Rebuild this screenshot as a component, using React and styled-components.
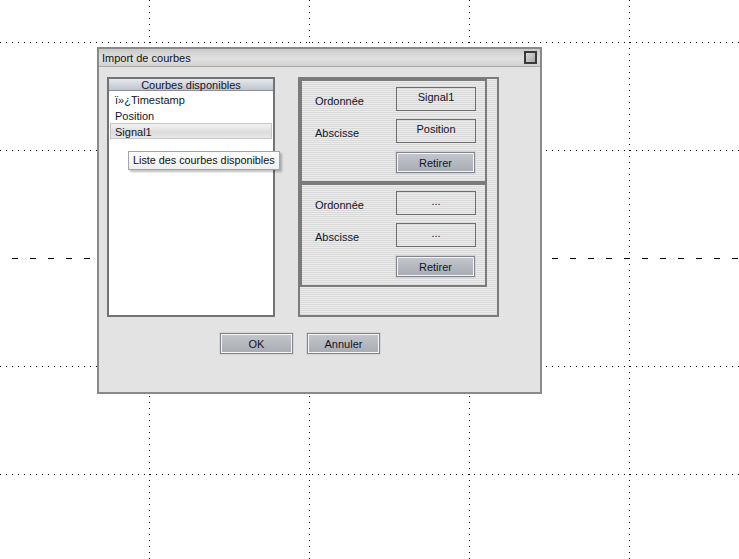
import React from 'react'
import styled, { createGlobalStyle } from 'styled-components'

const GlobalStyle = createGlobalStyle`
  html, body {
    margin: 0;
    padding: 0;
    background: #ffffff;
  }
  * {
    box-sizing: border-box;
  }
`

const Desktop = styled.div`
  position: relative;
  width: 739px;
  height: 559px;
  overflow: hidden;
  background: #ffffff;
  font-family: 'Liberation Sans', Arial, sans-serif;
  font-size: 11px;
  color: #141428;
`

const GridSvg = styled.svg`
  position: absolute;
  left: 0;
  top: 0;
`

const Dialog = styled.div`
  position: absolute;
  left: 97px;
  top: 47px;
  width: 445px;
  height: 347px;
  border: 2px solid #8a8a8a;
  background: #e3e3e3;
  display: flex;
  flex-direction: column;
`

const TitleBar = styled.div`
  height: 18px;
  display: flex;
  align-items: center;
  justify-content: space-between;
  padding: 0 3px 0 3px;
  background: linear-gradient(#cacaca, #e0e0e0 55%, #d2d2d2);
  border-bottom: 1px solid #a9a9a9;
`

const Title = styled.span`
  font-size: 11px;
  color: #111;
`

const CloseBox = styled.div`
  width: 13px;
  height: 13px;
  border: 2px solid #3a3a3a;
  background: linear-gradient(135deg, #d8d8d8, #a9a9a9);
`

const Content = styled.div`
  display: flex;
  gap: 23px;
  padding: 10px 0 0 8px;
`

const ListBox = styled.div`
  position: relative;
  width: 168px;
  height: 240px;
  border: 2px solid #6f7478;
  background: #ffffff;
  display: flex;
  flex-direction: column;
`

const ListHeader = styled.div`
  height: 12px;
  line-height: 12px;
  text-align: center;
  background: linear-gradient(#e6e9ee, #bfc4cb);
  border-bottom: 1px solid #8c9096;
  color: #141428;
`

const ListItems = styled.div`
  padding-top: 0;
  display: flex;
  flex-direction: column;
`

const ListItem = styled.div`
  height: 16px;
  line-height: 16px;
  padding-left: 4px;
  margin: 0 1px;
  border: 1px solid ${({ $selected }) => ($selected ? '#c6c6c6' : 'transparent')};
  background: ${({ $selected }) =>
    $selected ? 'linear-gradient(#f2f2f2, #dcdcdc 60%, #e8e8e8)' : 'transparent'};
`

const Tooltip = styled.div`
  position: absolute;
  left: 19px;
  top: 72px;
  height: 19px;
  padding: 0 4px;
  line-height: 17px;
  font-size: 10.8px;
  white-space: nowrap;
  border: 1px solid #a5a5a5;
  background: linear-gradient(#ffffff, #eeeeee);
  box-shadow: 2px 2px 2px rgba(0, 0, 0, 0.25);
  color: #111;
`

const SlotsPanel = styled.div`
  width: 201px;
  height: 240px;
  border: 2px solid #7b7b7b;
  background: repeating-linear-gradient(#ececec 0 1px, #d9d9d9 1px 2px);
  display: flex;
  flex-direction: column;
`

const SlotGroup = styled.div`
  width: 187px;
  height: 104px;
  border: 2px solid #7b7b7b;
  display: grid;
  grid-template-columns: 81px 80px;
  grid-auto-rows: 24px;
  row-gap: 8px;
  padding: 6px 0 0 13px;
`

const SlotLabel = styled.div`
  display: flex;
  align-items: center;
  padding-top: 4px;
  color: #141428;
`

const SlotField = styled.div`
  border: 1px solid #6e6e6e;
  text-align: center;
  padding-top: 3px;
  color: #141428;
`

const ButtonCell = styled.div`
  grid-column: 2;
  padding-top: 1px;
`

const Button = styled.button`
  width: ${({ $w }) => $w}px;
  height: 21px;
  padding: 0;
  font-family: 'Liberation Sans', Arial, sans-serif;
  font-size: 11px;
  color: #141428;
  border: 1px solid #80858d;
  box-shadow: inset 0 0 0 1px #f6f6f6, 0 0 0 1px #d2d5da;
  background: linear-gradient(#c3c6cb, #a8acb3);
  cursor: pointer;
`

const Footer = styled.div`
  display: flex;
  gap: 14px;
  padding: 16px 0 0 121px;
`

const H_DOTS = [42, 150, 366, 474]
const V_DOTS = [150, 310, 470, 630]

const GridLines = () => (
  <GridSvg width="739" height="559" shapeRendering="crispEdges">
    {H_DOTS.map((y) => (
      <line key={'h' + y} x1="0" y1={y + 0.5} x2="739" y2={y + 0.5} stroke="#000" strokeWidth="1" strokeDasharray="1 5" />
    ))}
    {V_DOTS.map((x) => (
      <line key={'v' + x} x1={x - 0.5} y1="0" x2={x - 0.5} y2="559" stroke="#000" strokeWidth="1" strokeDasharray="1 5" />
    ))}
    <line x1="12" y1="258.5" x2="739" y2="258.5" stroke="#000" strokeWidth="1.4" strokeDasharray="6 12" />
  </GridSvg>
)

const Slot = ({ ordinate, abscissa }) => (
  <SlotGroup>
    <SlotLabel>Ordonnée</SlotLabel>
    <SlotField>{ordinate}</SlotField>
    <SlotLabel>Abscisse</SlotLabel>
    <SlotField>{abscissa}</SlotField>
    <ButtonCell>
      <Button $w={79}>Retirer</Button>
    </ButtonCell>
  </SlotGroup>
)

export default function App() {
  return (
    <Desktop>
      <GlobalStyle />
      <GridLines />
      <Dialog>
        <TitleBar>
          <Title>Import de courbes</Title>
          <CloseBox />
        </TitleBar>
        <Content>
          <ListBox>
            <ListHeader>Courbes disponibles</ListHeader>
            <ListItems>
              <ListItem>ï»¿Timestamp</ListItem>
              <ListItem>Position</ListItem>
              <ListItem $selected>Signal1</ListItem>
            </ListItems>
            <Tooltip>Liste des courbes disponibles</Tooltip>
          </ListBox>
          <SlotsPanel>
            <Slot ordinate="Signal1" abscissa="Position" />
            <Slot ordinate="..." abscissa="..." />
          </SlotsPanel>
        </Content>
        <Footer>
          <Button $w={73}>OK</Button>
          <Button $w={73}>Annuler</Button>
        </Footer>
      </Dialog>
    </Desktop>
  )
}
